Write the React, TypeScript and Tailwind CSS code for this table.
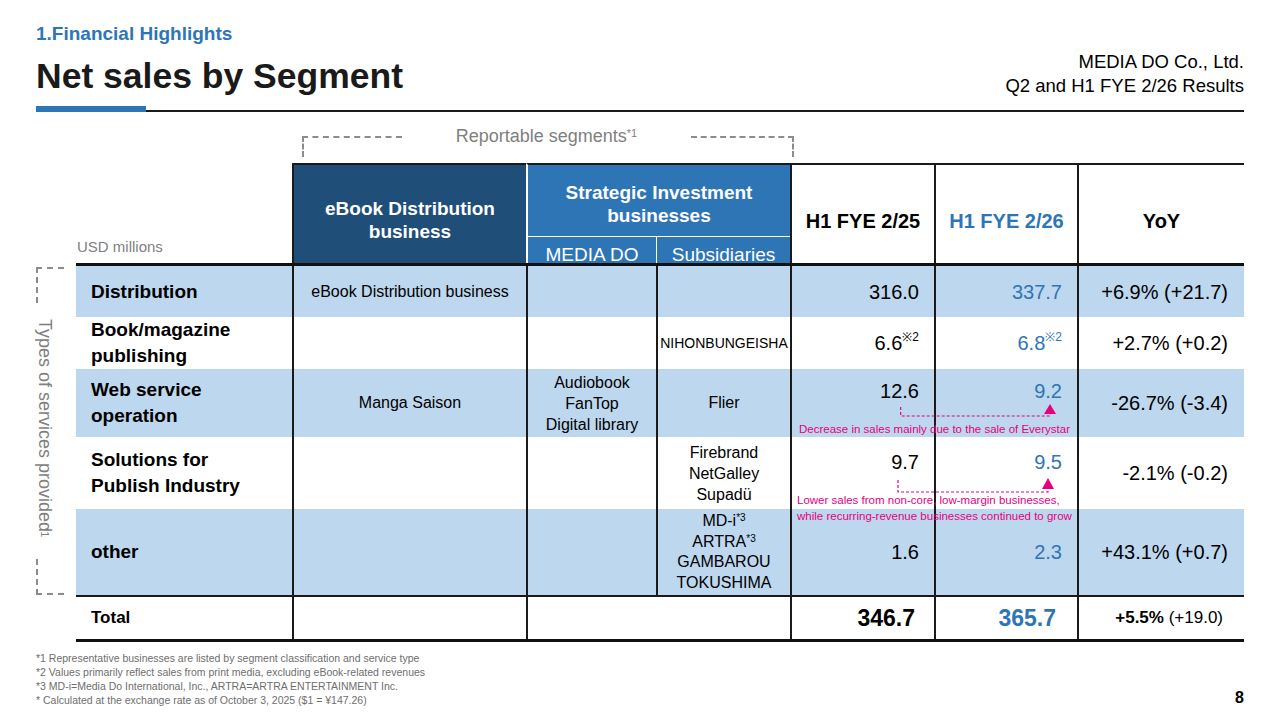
import React from "react";

const BLUE = "text-[#2e75b6]";
const ROW_BLUE = "bg-[#bdd7ee]";
const LINE = "border-l-2 border-[#1a1a1a]";

const Label: React.FC<{ lines: string[]; bg: string }> = ({ lines, bg }) => (
  <div className={`${bg} flex flex-col justify-center pl-[15px] text-[19px] font-bold leading-[26px] text-black`}>
    {lines.map((l) => (
      <span key={l}>{l}</span>
    ))}
  </div>
);

const Mid: React.FC<{ bg: string; children?: React.ReactNode; className?: string }> = ({ bg, children, className = "" }) => (
  <div className={`${bg} ${LINE} flex flex-col items-center justify-center text-center text-black ${className}`}>
    {children}
  </div>
);

const Num: React.FC<{ bg: string; children: React.ReactNode; className?: string }> = ({ bg, children, className = "" }) => (
  <div className={`${bg} ${LINE} flex justify-end pr-[15px] text-[20px] leading-[24px] ${className}`}>
    {children}
  </div>
);

const Yoy: React.FC<{ bg: string; children: React.ReactNode; className?: string }> = ({ bg, children, className = "" }) => (
  <div className={`${bg} ${LINE} flex items-center justify-end pr-[16px] text-[20px] text-black ${className}`}>
    {children}
  </div>
);

export default function App() {
  return (
    <div className="relative w-[1280px] h-[720px] overflow-hidden bg-white font-['Liberation_Sans',Arial,sans-serif] text-black">
      <div className="px-[36px] pt-[23px]">
        {/* title block */}
        <div className="flex justify-between">
          <div>
            <div className={`text-[19px] font-bold leading-[22px] ${BLUE}`}>1.Financial Highlights</div>
            <div className="mt-[11px] text-[35.5px] font-bold leading-[40px] text-[#1a1a1a]">Net sales by Segment</div>
          </div>
          <div className="mt-[27px] text-right text-[18.5px] leading-[24px] text-black">
            <div>MEDIA DO Co., Ltd.</div>
            <div>Q2 and H1 FYE 2/26 Results</div>
          </div>
        </div>
        <div className="mt-[8px] flex h-[6px] items-end">
          <div className="h-[6px] w-[110px] bg-[#2e75b6]" />
          <div className="h-[2px] flex-1 bg-[#1a1a1a]" />
        </div>

        {/* reportable segments bracket */}
        <div className="ml-[266px] mt-[24px] flex h-[21px] w-[492px]">
          <div className="w-[100px] border-l-2 border-t-2 border-dashed border-[#8c8c8c]" />
          <div className="-mt-[11px] flex-1 text-center text-[18px] leading-[22px] text-[#7f7f7f]">
            Reportable segments<sup className="text-[11px]">*1</sup>
          </div>
          <div className="w-[103px] border-r-2 border-t-2 border-dashed border-[#8c8c8c]" />
        </div>

        <div className="mt-[6px] flex">
          {/* types of services bracket */}
          <div className="flex w-[41px] flex-col pb-[47px] pt-[104px]">
            <div className="h-[36px] w-[28px] border-l-2 border-t-2 border-dashed border-[#8c8c8c]" />
            <div className="flex flex-1 items-center">
              <div className="text-[18px] leading-[18px] text-[#7f7f7f] [writing-mode:vertical-rl]">
                Types of services provided<sup className="text-[11px]">*1</sup>
              </div>
            </div>
            <div className="h-[36px] w-[28px] border-b-2 border-l-2 border-dashed border-[#8c8c8c]" />
          </div>

          {/* table */}
          <div className="grid grid-cols-[216px_234px_130px_134px_144px_143px_167px] grid-rows-[74px_26px_3px_51px_52px_68px_72px_86px_2px_42px_3px]">
            {/* header */}
            <div className="row-span-2 flex items-end pb-[7px] pl-[1px] text-[15px] leading-[18px] text-[#7f7f7f]">USD millions</div>
            <div className="row-span-2 flex items-center justify-center border-l-2 border-t-2 border-[#1a1a1a] bg-[#1f4e79] pt-[12px] text-center text-[19px] font-bold leading-[23px] text-white">
              eBook Distribution
              <br />
              business
            </div>
            <div className="col-span-2 flex items-center justify-center border-b border-l-2 border-t-2 border-[#1a1a1a] border-b-white border-l-white bg-[#2e75b6] pt-[6px] text-center text-[19px] font-bold leading-[23px] text-white">
              Strategic Investment
              <br />
              businesses
            </div>
            <div className="row-span-2 flex items-center justify-center border-l-2 border-t-2 border-[#1a1a1a] pt-[14px] text-[20px] font-bold">H1 FYE 2/25</div>
            <div className={`row-span-2 flex items-center justify-center border-l-2 border-t-2 border-[#1a1a1a] pt-[14px] text-[20px] font-bold ${BLUE}`}>H1 FYE 2/26</div>
            <div className="row-span-2 flex items-center justify-center border-l-2 border-t-2 border-[#1a1a1a] pt-[14px] text-[20px] font-bold">YoY</div>
            <div className="flex items-center justify-center border-l-2 border-white bg-[#2e75b6] pt-[9px] text-[19px] leading-[20px] text-white">MEDIA DO</div>
            <div className="flex items-center justify-center border-l border-white bg-[#2e75b6] pt-[9px] text-[19px] leading-[20px] text-white">Subsidiaries</div>
            <div className="relative col-span-7 bg-[#111]" />

            {/* Distribution */}
            <Label lines={["Distribution"]} bg={ROW_BLUE} />
            <Mid bg={ROW_BLUE} className="text-[16px]">eBook Distribution business</Mid>
            <Mid bg={ROW_BLUE} />
            <Mid bg={ROW_BLUE} />
            <Num bg={ROW_BLUE} className="items-center">316.0</Num>
            <Num bg={ROW_BLUE} className={`items-center ${BLUE}`}>337.7</Num>
            <Yoy bg={ROW_BLUE}>+6.9% (+21.7)</Yoy>

            {/* Book/magazine publishing */}
            <Label lines={["Book/magazine", "publishing"]} bg="bg-white" />
            <Mid bg="bg-white" />
            <Mid bg="bg-white" />
            <Mid bg="bg-white" className="whitespace-nowrap text-[14px]">NIHONBUNGEISHA</Mid>
            <Num bg="bg-white" className="items-center">
              6.6<sup className="text-[12px]">※2</sup>
            </Num>
            <Num bg="bg-white" className={`items-center ${BLUE}`}>
              6.8<sup className="text-[12px]">※2</sup>
            </Num>
            <Yoy bg="bg-white">+2.7% (+0.2)</Yoy>

            {/* Web service operation */}
            <Label lines={["Web service", "operation"]} bg={ROW_BLUE} />
            <Mid bg={ROW_BLUE} className="text-[16px]">Manga Saison</Mid>
            <Mid bg={ROW_BLUE} className="text-[16px] leading-[21px]">
              <span>Audiobook</span>
              <span>FanTop</span>
              <span>Digital library</span>
            </Mid>
            <Mid bg={ROW_BLUE} className="text-[16px]">Flier</Mid>
            <Num bg={ROW_BLUE} className="items-start pt-[10px]">12.6</Num>
            <Num bg={ROW_BLUE} className={`items-start pt-[10px] ${BLUE}`}>9.2</Num>
            <Yoy bg={ROW_BLUE}>-26.7% (-3.4)</Yoy>

            {/* Solutions */}
            <Label lines={["Solutions for", "Publish Industry"]} bg="bg-white" />
            <Mid bg="bg-white" />
            <Mid bg="bg-white" />
            <Mid bg="bg-white" className="text-[16px] leading-[21px]">
              <span>Firebrand</span>
              <span>NetGalley</span>
              <span>Supadü</span>
            </Mid>
            <Num bg="bg-white" className="items-start pt-[13px]">9.7</Num>
            <Num bg="bg-white" className={`items-start pt-[13px] ${BLUE}`}>9.5</Num>
            <Yoy bg="bg-white">-2.1% (-0.2)</Yoy>

            {/* other */}
            <Label lines={["other"]} bg={ROW_BLUE} />
            <Mid bg={ROW_BLUE} />
            <Mid bg={ROW_BLUE} />
            <Mid bg={ROW_BLUE} className="text-[16px] leading-[20.5px]">
              <span>
                MD-i<sup className="text-[10px]">*3</sup>
              </span>
              <span>
                ARTRA<sup className="text-[10px]">*3</sup>
              </span>
              <span>GAMBAROU</span>
              <span>TOKUSHIMA</span>
            </Mid>
            <Num bg={ROW_BLUE} className="items-center">1.6</Num>
            <Num bg={ROW_BLUE} className={`items-center ${BLUE}`}>2.3</Num>
            <Yoy bg={ROW_BLUE}>+43.1% (+0.7)</Yoy>

            <div className="col-span-7 bg-[#1a1a1a]" />

            {/* Total */}
            <div className="flex items-center pl-[15px] text-[17px] font-bold">Total</div>
            <Mid bg="bg-white" />
            <Mid bg="bg-white" className="col-span-2" />
            <div className={`flex items-center justify-end pr-[19px] text-[23px] font-bold ${LINE}`}>346.7</div>
            <div className={`flex items-center justify-end pr-[21px] text-[23px] font-bold ${LINE} ${BLUE}`}>365.7</div>
            <div className={`flex items-center justify-end pr-[21px] text-[17px] ${LINE}`}>
              <span className="font-bold">+5.5%</span>&nbsp;(+19.0)
            </div>

            <div className="col-span-7 bg-[#111]" />
          </div>
        </div>

        {/* footnotes */}
        <div className="mt-[9px] flex items-end justify-between">
          <div className="text-[10.5px] leading-[14px] text-[#6e6e6e]">
            <div>*1 Representative businesses are listed by segment classification and service type</div>
            <div>*2 Values primarily reflect sales from print media, excluding eBook-related revenues</div>
            <div>*3 MD-i=Media Do International, Inc., ARTRA=ARTRA ENTERTAINMENT Inc.</div>
            <div>* Calculated at the exchange rate as of October 3, 2025 ($1 = ¥147.26)</div>
          </div>
          <div className="pb-[1px] text-[16px] font-bold leading-[16px]">8</div>
        </div>
      </div>

      {/* annotations over the table */}
      <svg className="absolute left-[890px] top-[400px]" width="170" height="20" viewBox="0 0 170 20">
        <path d="M10.7 7 V16 H160 V14" fill="none" stroke="#e5007e" strokeWidth="1.2" strokeDasharray="3 2" />
        <polygon points="154,14 166,14 160,4" fill="#e5007e" />
      </svg>
      <div className="absolute left-[799px] top-[422px] whitespace-nowrap text-[11.5px] leading-[14px] text-[#e5007e]">
        Decrease in sales mainly due to the sale of Everystar
      </div>
      <svg className="absolute left-[890px] top-[475px]" width="170" height="20" viewBox="0 0 170 20">
        <path d="M8 5 V17 H158 V14" fill="none" stroke="#e5007e" strokeWidth="1.2" strokeDasharray="3 2" />
        <polygon points="152,14 164,14 158,3" fill="#e5007e" />
      </svg>
      <div className="absolute left-[797px] top-[493px] whitespace-nowrap text-[11.5px] leading-[15.5px] text-[#e5007e]">
        <div>Lower sales from non-core, low-margin businesses,</div>
        <div>while recurring-revenue businesses continued to grow</div>
      </div>
    </div>
  );
}
